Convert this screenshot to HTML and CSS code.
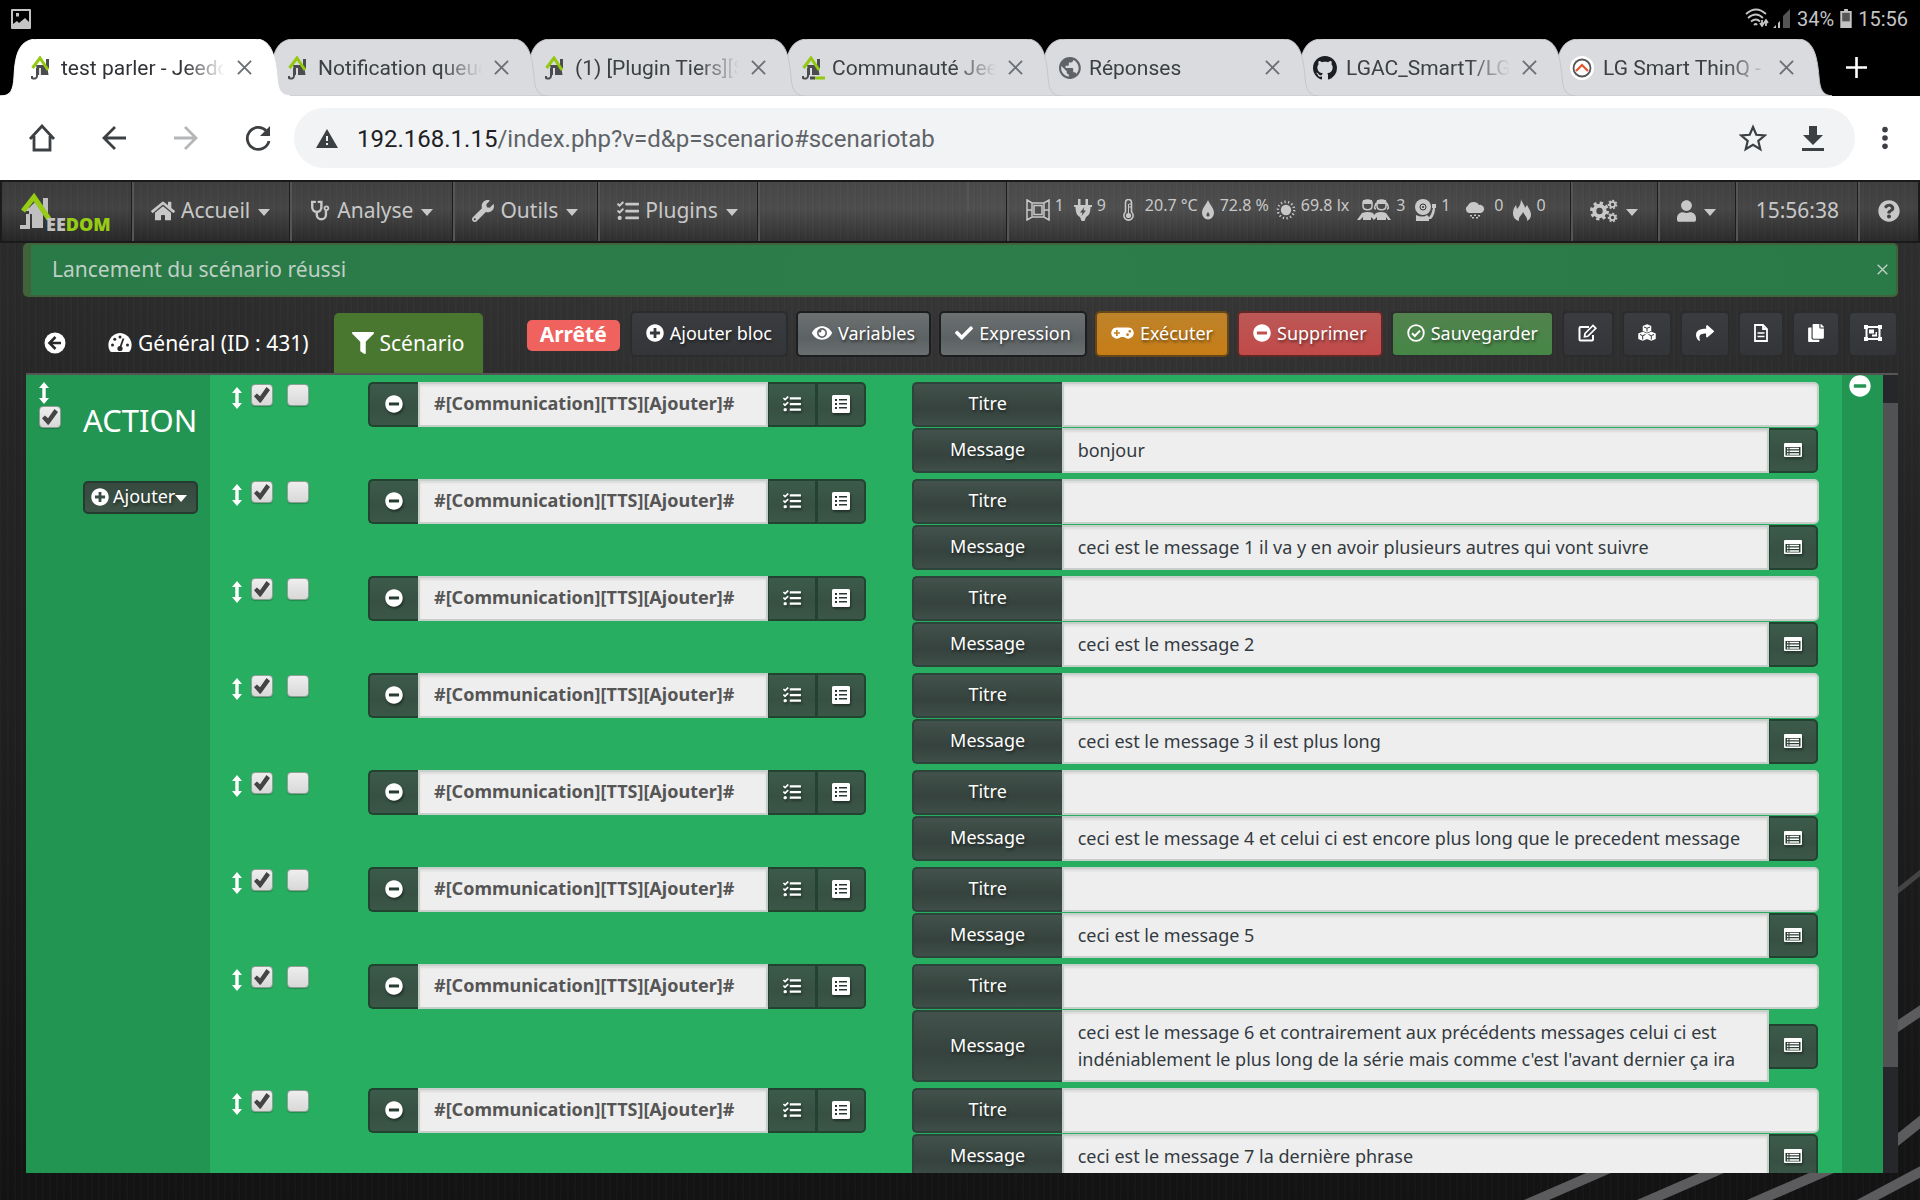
FILE: index.html
```html
<!DOCTYPE html>
<html lang="fr">
<head>
<meta charset="utf-8">
<title>test parler - Jeedom</title>
<link rel="stylesheet" href="styles.css">
</head>
<body>
<svg class="sprite" aria-hidden="true">
  <symbol id="shape" viewBox="0 0 290 57" preserveAspectRatio="none"><path d="M0 57C11 57 13 51 14 38C15 13 20 0 38 0H255C270 0 275 13 277 38C278 50 280 57 292 57Z"/></symbol>
  <symbol id="x" viewBox="0 0 16 16"><path d="M1 1L15 15M15 1L1 15" fill="none" stroke="currentColor" stroke-width="2"/></symbol>
  <symbol id="jee" viewBox="0 0 24 24"><path d="M5 9h11l1.500 10H7z" fill="#4b4b50"/><path d="M15 3h3v9h-3z" fill="#4b4b50"/><path d="M6 12v8c0 3-3 3-5 2v-2" fill="none" stroke="#4b4b50" stroke-width="2"/><path d="M8 12h2v7H8z" fill="#ddd"/><path d="M1.500 12L9 2l8 12" fill="none" stroke="#93c90f" stroke-width="3"/></symbol>
  <symbol id="home" viewBox="0 0 576 512"><path d="M280.37 148.26L96 300.11V464a16 16 0 0 0 16 16l112.06-.29a16 16 0 0 0 15.92-16V368a16 16 0 0 1 16-16h64a16 16 0 0 1 16 16v95.64a16 16 0 0 0 16 16.05L464 480a16 16 0 0 0 16-16V300L295.67 148.26a12.19 12.19 0 0 0-15.3 0zM571.6 251.47L488 182.56V44.05a12 12 0 0 0-12-12h-56a12 12 0 0 0-12 12v72.61L318.47 43a48 48 0 0 0-61 0L4.34 251.47a12 12 0 0 0-1.6 16.9l25.5 31A12 12 0 0 0 45.15 301l235.22-193.74a12.19 12.19 0 0 1 15.3 0L530.9 301a12 12 0 0 0 16.9-1.6l25.5-31a12 12 0 0 0-1.7-16.93z"/></symbol>
  <symbol id="steth" viewBox="0 0 21 24"><path d="M5 2H2v6a5 5 0 0 0 10 0V2H9M7 13v3a5 5 0 0 0 10 0v-5" fill="none" stroke="currentColor" stroke-width="2.6" stroke-linecap="round"/><circle cx="17.5" cy="9" r="3" fill="currentColor"/><circle cx="17.5" cy="9" r="1" fill="#333"/></symbol>
  <symbol id="wrench" viewBox="0 0 512 512"><path d="M507.73 109.1c-2.24-9.03-13.54-12.09-20.12-5.51l-74.36 74.36-67.88-11.31-11.31-67.88 74.36-74.36c6.62-6.62 3.43-17.9-5.66-20.16-47.38-11.74-99.55.91-136.58 37.93-39.64 39.64-50.55 97.1-34.05 147.2L18.74 402.76c-24.99 24.99-24.99 65.51 0 90.5 24.99 24.99 65.51 24.99 90.5 0l213.21-213.21c50.12 16.71 107.47 5.68 147.37-34.22 37.07-37.07 49.7-89.32 37.91-136.73zM64 472c-13.25 0-24-10.75-24-24 0-13.26 10.75-24 24-24s24 10.74 24 24c0 13.25-10.75 24-24 24z"/></symbol>
  <symbol id="tasks" viewBox="0 0 512 512"><path d="M139.61 35.5a12 12 0 0 0-17 0L58.93 98.81l-22.7-22.12a12 12 0 0 0-17 0L3.53 92.41a12 12 0 0 0 0 17l47.59 47.4a12.78 12.78 0 0 0 17.61 0l15.59-15.62L156.52 69a12.09 12.09 0 0 0 .09-17zm0 159.19a12 12 0 0 0-17 0l-63.68 63.72-22.7-22.1a12 12 0 0 0-17 0L3.53 252a12 12 0 0 0 0 17L51 316.5a12.77 12.77 0 0 0 17.6 0l15.7-15.69 72.2-72.22a12 12 0 0 0 .09-16.9zM64 368c-26.49 0-48.59 21.5-48.59 48S37.53 464 64 464a48 48 0 0 0 0-96zm432 16H208a16 16 0 0 0-16 16v32a16 16 0 0 0 16 16h288a16 16 0 0 0 16-16v-32a16 16 0 0 0-16-16zm0-320H208a16 16 0 0 0-16 16v32a16 16 0 0 0 16 16h288a16 16 0 0 0 16-16V80a16 16 0 0 0-16-16zm0 160H208a16 16 0 0 0-16 16v32a16 16 0 0 0 16 16h288a16 16 0 0 0 16-16v-32a16 16 0 0 0-16-16z"/></symbol>
  <symbol id="plus" viewBox="0 0 512 512"><path d="M256 8C119 8 8 119 8 256s111 248 248 248 248-111 248-248S393 8 256 8zm144 276c0 6.6-5.4 12-12 12h-92v92c0 6.6-5.4 12-12 12h-56c-6.6 0-12-5.4-12-12v-92h-92c-6.6 0-12-5.4-12-12v-56c0-6.6 5.4-12 12-12h92v-92c0-6.6 5.4-12 12-12h56c6.6 0 12 5.4 12 12v92h92c6.6 0 12 5.4 12 12v56z"/></symbol>
  <symbol id="minus" viewBox="0 0 512 512"><path d="M256 8C119 8 8 119 8 256s111 248 248 248 248-111 248-248S393 8 256 8zM124 296c-6.6 0-12-5.4-12-12v-56c0-6.6 5.4-12 12-12h264c6.6 0 12 5.4 12 12v56c0 6.6-5.4 12-12 12H124z"/></symbol>
  <symbol id="eye" viewBox="0 0 576 512"><path d="M572.52 241.4C518.29 135.59 410.93 64 288 64S57.68 135.64 3.48 241.41a32.35 32.35 0 0 0 0 29.19C57.71 376.41 165.07 448 288 448s230.32-71.64 284.52-177.41a32.35 32.35 0 0 0 0-29.19zM288 400a144 144 0 1 1 144-144 143.93 143.93 0 0 1-144 144zm0-240a95.31 95.31 0 0 0-25.31 3.79 47.85 47.85 0 0 1-66.9 66.9A95.78 95.78 0 1 0 288 160z"/></symbol>
  <symbol id="check" viewBox="0 0 512 512"><path d="M173.898 439.404l-166.4-166.4c-9.997-9.997-9.997-26.206 0-36.204l36.203-36.204c9.997-9.998 26.207-9.998 36.204 0L192 312.69 432.095 72.596c9.997-9.997 26.207-9.997 36.204 0l36.203 36.204c9.997 9.997 9.997 26.206 0 36.204l-294.4 294.401c-9.998 9.997-26.207 9.997-36.204-.001z"/></symbol>
  <symbol id="pad" viewBox="0 0 640 512"><path d="M480.07 96H160a160 160 0 1 0 114.24 272h91.5A160 160 0 1 0 480.07 96zM248 268a12 12 0 0 1-12 12h-52v52a12 12 0 0 1-12 12h-24a12 12 0 0 1-12-12v-52H84a12 12 0 0 1-12-12v-24a12 12 0 0 1 12-12h52v-52a12 12 0 0 1 12-12h24a12 12 0 0 1 12 12v52h52a12 12 0 0 1 12 12zm216 76a40 40 0 1 1 40-40 40 40 0 0 1-40 40zm64-96a40 40 0 1 1 40-40 40 40 0 0 1-40 40z"/></symbol>
  <symbol id="okc" viewBox="0 0 18 18"><circle cx="9" cy="9" r="7.8" fill="none" stroke="currentColor" stroke-width="1.8"/><path d="M5 9.3l2.8 2.7L13 6.6" fill="none" stroke="currentColor" stroke-width="2"/></symbol>
  <symbol id="filter" viewBox="0 0 512 512"><path d="M487.976 0H24.028C2.71 0-8.047 25.866 7.058 40.971L192 225.941V432c0 7.831 3.821 15.17 10.237 19.662l80 55.98C298.02 518.69 320 507.493 320 487.98V225.941l184.947-184.97C520.021 25.896 509.338 0 487.976 0z"/></symbol>
  <symbol id="user" viewBox="0 0 448 512"><path d="M224 256c70.7 0 128-57.3 128-128S294.7 0 224 0 96 57.3 96 128s57.3 128 128 128zm89.6 32h-16.7c-22.2 10.2-46.9 16-72.9 16s-50.6-5.8-72.9-16h-16.7C60.2 288 0 348.2 0 422.4V464c0 26.5 21.5 48 48 48h352c26.5 0 48-21.5 48-48v-41.6c0-74.2-60.2-134.4-134.4-134.4z"/></symbol>
  <symbol id="help" viewBox="0 0 512 512"><path d="M504 256c0 136.997-111.043 248-248 248S8 392.997 8 256C8 119.083 119.043 8 256 8s248 111.083 248 248zM262.655 90c-54.497 0-89.255 22.957-116.549 63.758-3.536 5.286-2.353 12.415 2.715 16.258l34.699 26.31c5.205 3.947 12.621 3.008 16.665-2.122 17.864-22.658 30.113-35.797 57.303-35.797 20.429 0 45.698 13.148 45.698 32.958 0 14.976-12.363 22.667-32.534 33.976C247.128 238.528 216 254.941 216 296v4c0 6.627 5.373 12 12 12h56c6.627 0 12-5.373 12-12v-1.333c0-28.462 83.186-29.647 83.186-106.667 0-58.002-60.165-102-116.531-102zM256 338c-25.365 0-46 20.635-46 46 0 25.364 20.635 46 46 46s46-20.636 46-46c0-25.365-20.635-46-46-46z"/></symbol>
  <symbol id="cogs" viewBox="0 0 28 24"><g fill="none" stroke="currentColor"><circle cx="9.5" cy="12" r="5.2" stroke-width="4"/><circle cx="9.5" cy="12" r="8" stroke-width="3" stroke-dasharray="3.2 3.08"/><circle cx="22.5" cy="5.5" r="2.6" stroke-width="1.8"/><circle cx="22.5" cy="5.5" r="4" stroke-width="1.6" stroke-dasharray="2 1.6"/><circle cx="22.5" cy="18.5" r="2.6" stroke-width="1.8"/><circle cx="22.5" cy="18.5" r="4" stroke-width="1.6" stroke-dasharray="2 1.6"/></g></symbol>
  <symbol id="dash" viewBox="0 0 24 22"><path d="M12 1a12 12 0 0 0-10.300 17.500q.8 1.500 2 1.500h16.600q1.200 0 2-1.500A12 12 0 0 0 12 1z"/><g fill="#2a2a2a"><circle cx="4.500" cy="13" r="1.500"/><circle cx="6.800" cy="7.200" r="1.500"/><circle cx="12" cy="5" r="1.500"/><circle cx="19.500" cy="13" r="1.500"/><circle cx="12" cy="16.500" r="2.600"/></g><path d="M12 16L15.500 6.500" stroke="#2a2a2a" stroke-width="1.800"/></symbol>
  <symbol id="back" viewBox="0 0 22 22"><circle cx="11" cy="11" r="10.500"/><path d="M11.500 5L5.500 11l6 6M6 11h11" fill="none" stroke="#2a2a2a" stroke-width="2.600"/></symbol>
  <symbol id="edit" viewBox="0 0 20 18"><path d="M11 3H2.500Q1.500 3 1.500 4v11.500q0 1 1 1H14q1 0 1-1V11" fill="none" stroke="currentColor" stroke-width="2"/><path d="M7 9.500L15 1.500l2.800 2.800L9.800 12.300 6.500 12.800z" fill="none" stroke="currentColor" stroke-width="1.700"/></symbol>
  <symbol id="cubes" viewBox="0 0 18 18"><g stroke="currentColor" stroke-width="1.500"><path d="M9 1l3.500 1.500v4L9 8 5.500 6.500v-4z"/><path d="M4.700 8.500L8.300 10v4.500L4.700 16 1 14.500V10zM13.300 8.500L17 10v4.500L13.300 16 9.700 14.500V10z"/></g><path d="M6 3l3 1.300L12 3M2 10.500l2.700 1.200 2.800-1.200M4.700 12v3.500M10.500 10.500l2.800 1.200 2.700-1.200M13.300 12v3.500M9 4.500v3" fill="none" stroke="#333" stroke-width="1"/></symbol>
  <symbol id="share" viewBox="0 0 512 512"><path d="M503.691 189.836L327.687 37.851C312.281 24.546 288 35.347 288 56.015v80.053C127.371 137.907 0 170.1 0 322.326c0 61.441 39.581 122.309 83.333 154.132 13.653 9.931 33.111-2.533 28.077-18.631C66.066 312.814 132.917 274.316 288 272.085V360c0 20.7 24.3 31.453 39.687 18.164l176.004-152c11.071-9.562 11.086-26.753 0-36.328z"/></symbol>
  <symbol id="file" viewBox="0 0 14 18"><path d="M1 1h8l4 4v12H1zM9 1v4h4" fill="none" stroke="currentColor" stroke-width="1.800"/><path d="M3.500 9h7M3.500 12.500h7" stroke="currentColor" stroke-width="1.700"/></symbol>
  <symbol id="copy" viewBox="0 0 448 512"><path d="M320 448v40c0 13.255-10.745 24-24 24H24c-13.255 0-24-10.745-24-24V120c0-13.255 10.745-24 24-24h72v296c0 30.879 25.121 56 56 56h168zm0-344V0H152c-13.255 0-24 10.745-24 24v368c0 13.255 10.745 24 24 24h272c13.255 0 24-10.745 24-24V128H344c-13.200 0-24-10.800-24-24zm120.971-31.029L375.029 7.029A24 24 0 0 0 358.059 0H352v96h96v-6.059a24 24 0 0 0-7.029-16.970z"/></symbol>
  <symbol id="group" viewBox="0 0 18 18"><path d="M2.500 3h13v12h-13z" fill="none" stroke="currentColor" stroke-width="2"/><path d="M0 1h4v4H0zM14 1h4v4h-4zM0 13h4v4H0zM14 13h4v4h-4zM5 5.500h5v4H5zM8 10.500h3.500V8H13v4.500H8z"/></symbol>
  <symbol id="list" viewBox="0 0 18 18"><path fill-rule="evenodd" d="M1.500 0h15q1.500 0 1.500 1.500v15q0 1.500-1.500 1.500h-15Q0 18 0 16.500v-15Q0 0 1.500 0zM3 4v2h2V4zm4 0v1.600h8V4zM3 8v2h2V8zm4 0v1.600h8V8zM3 12v2h2v-2zm4 0v1.600h8V12z"/></symbol>
  <symbol id="card" viewBox="0 0 18 14"><path fill-rule="evenodd" d="M1 0h16q1 0 1 1v12q0 1-1 1H1q-1 0-1-1V1q0-1 1-1zM1.500 4v8.500h15V4z"/><path d="M3 5.500h1.500M3 8.200h1.500M3 11h1.500M5.500 5.500H15M5.500 8.200H15M5.500 11H15" stroke="currentColor" stroke-width="1.500"/></symbol>
  <symbol id="updown" viewBox="0 0 10 22"><path d="M5 0l5 6H6.700v10H10l-5 6-5-6h3.300V6H0z"/></symbol>
  <symbol id="window" viewBox="0 0 24 22"><path d="M1 1l5 3h12l5-3v20l-5-3H6l-5 3zM6 4v14M18 4v14M1 11h5M18 11h5M8 6.500h8v9H8z" fill="none" stroke="currentColor" stroke-width="1.500"/></symbol>
  <symbol id="plug" viewBox="0 0 18 22"><path fill-rule="evenodd" d="M4 0h2.500v6h5V0H14v6h4v2h-1.500c0 6-2 9-4.500 10l-1.500 4h-3L6 18C3.500 17 1.500 14 1.500 8H0V6h4zM10.500 8L6 13.500h2.500L7.500 17l4.500-5.500H9.500z"/></symbol>
  <symbol id="thermo" viewBox="0 0 24 22"><path d="M9.500 13V3.500a3 3 0 0 1 6 0V13a4.600 4.600 0 1 1-6 0z" fill="none" stroke="currentColor" stroke-width="1.600"/><circle cx="12.500" cy="16.500" r="2.600"/><path d="M12.500 5v11M13 5h2M13 8h2" stroke="currentColor"/></symbol>
  <symbol id="drop" viewBox="0 0 14 20"><path fill-rule="evenodd" d="M7 0c2 5 6 8 6 13a6 6.500 0 0 1-12 0C1 8 5 5 7 0zM7 12c-1 1.500-1.500 2-1.500 3a1.500 1.500 0 0 0 3 0c0-1-.5-1.500-1.500-3z"/></symbol>
  <symbol id="sun" viewBox="0 0 20 20"><circle cx="10" cy="10" r="5.200"/><circle cx="10" cy="10" r="8.200" fill="none" stroke="currentColor" stroke-width="2.400" stroke-dasharray="1.300 2.378"/></symbol>
  <symbol id="people" viewBox="0 0 34 22"><g fill="none" stroke="currentColor" stroke-width="1.500"><path d="M6 4c0-4 9-4 9 0v3c0 5-9 5-9 0z"/><path d="M20 4c0-4 9-4 9 0v3c0 5-9 5-9 0zM19 10c-3 0 0-5 0-6M30 10c3 0 0-5 0-6"/></g><path d="M6 1h9v4H6zM20 1h9v4h-9zM0 21l5-7q6-2 11 0l1 2 2-2q5-2 10 0l5 7h-3l-2-3v3h-9v-3l-3 3-3-3v3H6v-3l-3 3z"/></symbol>
  <symbol id="alarm" viewBox="0 0 21 22"><circle cx="8" cy="8" r="8"/><g fill="none" stroke="#333"><circle cx="8" cy="8" r="3"/></g><circle cx="8" cy="8" r="1" fill="#333"/><path d="M1 16q7 3 11 0l2 2v4H1zM17 5h4v4h-1q0 7-4 11h-3q4-5 5-11h-1z"/></symbol>
  <symbol id="cloud" viewBox="0 0 29 22"><path d="M9 14a4 4 0 0 1-1-7.500A6 5.500 0 0 1 19 6a4 4 0 0 1 2 8zM10 16h2v1.500h-2zM14 15.500h2V17h-2zM18 16h2v1.500h-2zM12 18h2v1.500h-2zM16 18h2v1.500h-2z"/></symbol>
  <symbol id="fire" viewBox="0 0 18 22"><path d="M8 0c1 4 4 6 4 9l2-3c2 4 4 6 4 10 0 3-2 5-4 6 1-3-2-5-4-9-1 3-5 5-4 9-4-1-6-4-6-8 0-3 1-5 3-8l1 4c3-3 4-6 4-10z"/></symbol>
</svg>

<header class="device">
  <svg class="pic" viewBox="0 0 20 20"><path fill="#c4c4c4" fill-rule="evenodd" d="M1 0h18q1 0 1 1v18q0 1-1 1H1q-1 0-1-1V1q0-1 1-1zM2 2v13l4-3 2 2 6-5 4 4V2zM5 4h3v3.500H5z"/></svg>
  <div class="device-info">
    <svg class="wifi" viewBox="0 0 46 22"><g fill="none" stroke="#c4c4c4" stroke-width="1.800"><path d="M1 6q10-9 20 0M3 10q8-7 15 0M6 13.500q5-4 9 0M9 17q2-2 3 0M17 12v6M15 15l2 3 2-3M21 18v-6M19 15l2-3 2 3"/></g><path d="M28 20l3-3v3zM33 20v-5l2-2v7z" fill="#c4c4c4"/><path d="M38 20V8l7-7v19z" fill="#555"/></svg>
    <span>34%</span>
    <svg class="batt" viewBox="0 0 12 20"><path d="M4 0h4v2h4v18H0V2h4z" fill="#c4c4c4"/><path d="M2 4h8v9H2z" fill="#555"/></svg>
    <span>15:56</span>
  </div>
</header>

<nav class="tabs">
  <a class="tab active" href="#"><svg class="tab-shape"><use href="#shape"/></svg><svg class="fav"><use href="#jee"/></svg><span class="tab-title">test parler - Jeedom</span><svg class="tab-x"><use href="#x"/></svg></a>
  <a class="tab" href="#"><svg class="tab-shape"><use href="#shape"/></svg><svg class="fav"><use href="#jee"/></svg><span class="tab-title">Notification queue</span><svg class="tab-x"><use href="#x"/></svg></a>
  <a class="tab" href="#"><svg class="tab-shape"><use href="#shape"/></svg><svg class="fav"><use href="#jee"/></svg><span class="tab-title">(1) [Plugin Tiers][S</span><svg class="tab-x"><use href="#x"/></svg></a>
  <a class="tab" href="#"><svg class="tab-shape"><use href="#shape"/></svg><svg class="fav" viewBox="0 0 24 24"><use href="#jee" width="24" height="24"/><path d="M8 22h5" stroke="#4b4b50" stroke-width="3"/><path d="M13 22h10" stroke="#93c90f" stroke-width="3"/></svg><span class="tab-title">Communauté Jeedom</span><svg class="tab-x"><use href="#x"/></svg></a>
  <a class="tab" href="#"><svg class="tab-shape"><use href="#shape"/></svg><svg class="fav" viewBox="2 1 22 22"><path fill="#5f6368" d="M12 2C6.480 2 2 6.480 2 12s4.480 10 10 10 10-4.480 10-10S17.520 2 12 2zm-1 17.930c-3.950-.49-7-3.850-7-7.930 0-.62.08-1.210.21-1.790L9 15v1c0 1.100.9 2 2 2v1.930zm6.900-2.540c-.26-.81-1-1.390-1.900-1.390h-1v-3c0-.55-.45-1-1-1H8v-2h2c.55 0 1-.45 1-1V7h2c1.100 0 2-.9 2-2v-.41c2.930 1.190 5 4.060 5 7.410 0 2.080-.8 3.970-2.100 5.390z"/></svg><span class="tab-title">Réponses</span><svg class="tab-x"><use href="#x"/></svg></a>
  <a class="tab" href="#"><svg class="tab-shape"><use href="#shape"/></svg><svg class="fav wide" viewBox="0 0 16 16"><path fill="#1b1f23" d="M8 0C3.580 0 0 3.580 0 8c0 3.540 2.290 6.530 5.470 7.590.4.07.55-.17.55-.38 0-.19-.01-.82-.01-1.490-2.010.37-2.530-.49-2.690-.94-.09-.23-.48-.94-.82-1.130-.28-.15-.68-.52-.01-.53.63-.01 1.080.58 1.230.82.72 1.210 1.870.87 2.330.66.07-.52.28-.87.51-1.070-1.780-.2-3.640-.89-3.640-3.950 0-.87.31-1.590.82-2.150-.08-.2-.36-1.020.08-2.120 0 0 .67-.21 2.200.82.64-.18 1.320-.27 2-.27s1.360.09 2 .27c1.530-1.040 2.200-.82 2.200-.82.44 1.100.16 1.920.08 2.120.51.56.82 1.270.82 2.150 0 3.070-1.870 3.750-3.650 3.950.29.25.54.73.54 1.480 0 1.070-.01 1.930-.01 2.200 0 .21.15.46.55.38A8.010 8.010 0 0 0 16 8c0-4.420-3.580-8-8-8z"/></svg><span class="tab-title">LGAC_SmartT/LGAC</span><svg class="tab-x"><use href="#x"/></svg></a>
  <a class="tab" href="#"><svg class="tab-shape"><use href="#shape"/></svg><svg class="fav wide" viewBox="0 0 24 24"><circle cx="12" cy="12" r="12" fill="#fff"/><circle cx="12" cy="12" r="8.500" fill="none" stroke="#555" stroke-width="1.800"/><path d="M6 15l6-6 6 6" fill="none" stroke="#e2572b" stroke-width="2.200"/></svg><span class="tab-title">LG Smart ThinQ - P</span><svg class="tab-x"><use href="#x"/></svg></a>
  <button class="new-tab" aria-label="Nouvel onglet"><svg viewBox="0 0 21 21"><path d="M10.500 0v21M0 10.500h21" stroke="#fff" stroke-width="2.600"/></svg></button>
</nav>

<div class="toolbar">
  <button aria-label="Accueil"><svg viewBox="0 0 28 28"><path d="M2 15L14 2l12 13M6 12v14h16V12" fill="none" stroke="currentColor" stroke-width="2.800"/></svg></button>
  <button aria-label="Précédent"><svg viewBox="0 0 28 28"><path d="M15 3L4 14l11 11M4 14h22" fill="none" stroke="currentColor" stroke-width="2.800"/></svg></button>
  <button class="off" aria-label="Suivant"><svg viewBox="0 0 28 28"><path d="M13 3l11 11-11 11M24 14H2" fill="none" stroke="currentColor" stroke-width="2.800"/></svg></button>
  <button aria-label="Actualiser"><svg viewBox="0 0 28 28"><path d="M22 6.500A11 11 0 1 0 25 17" fill="none" stroke="currentColor" stroke-width="2.800"/><path d="M26 2v10H16z"/></svg></button>
  <div class="url">
    <svg class="warn" viewBox="0 0 22 19"><path fill-rule="evenodd" d="M11 0l11 19H0zM10 7v5h2V7zm0 7v2h2v-2z"/></svg>
    <span class="address"><b>192.168.1.15</b>/index.php?v=d&amp;p=scenario#scenariotab</span>
    <button aria-label="Favori"><svg viewBox="0 0 28 28"><path d="M14 3l3.300 7.800 8.400.7-6.400 5.500 2 8.200L14 20.800l-7.300 4.400 2-8.200-6.400-5.500 8.400-.7z" fill="none" stroke="currentColor" stroke-width="2.200"/></svg></button>
    <button aria-label="Télécharger"><svg viewBox="0 0 28 28"><path d="M10 2h8v9h6L14 21 4 11h6zM3 24h22v3H3z"/></svg></button>
  </div>
  <button class="more" aria-label="Menu"><svg viewBox="0 0 28 28"><circle cx="14" cy="5" r="3"/><circle cx="14" cy="14" r="3"/><circle cx="14" cy="23" r="3"/></svg></button>
</div>

<main class="app">
  <svg class="stripes" viewBox="0 0 450 340" aria-hidden="true"><g stroke="#5c5c5e" stroke-width="10"><path d="M55 345L140 308M168 345L253 308M278 345L363 308M388 345L465 304M425 168L455 148M425 282L455 258"/><path d="M425 33L455 9" stroke-width="5" stroke="#444"/></g></svg>
  <nav class="menu">
    <a class="brand" href="#"><svg viewBox="0 0 34 40"><path d="M9 16l6-6 8 12v14H12V22H9z" fill="#c0c0c0"/><path d="M23 6h5v17h-5z" fill="#c0c0c0"/><path d="M8 22v13h-6v-2" fill="none" stroke="#c0c0c0" stroke-width="4"/><path d="M8 19v-3" stroke="#c0c0c0" stroke-width="4"/><path d="M3 19L14 5l15 22" fill="none" stroke="#97cc14" stroke-width="5"/></svg><span>EE<em>DOM</em></span></a>
    <a class="item" href="#"><svg class="i24"><use href="#home"/></svg>Accueil<i class="caret"></i></a>
    <a class="item" href="#"><svg class="i22"><use href="#steth"/></svg>Analyse<i class="caret"></i></a>
    <a class="item" href="#"><svg class="i22"><use href="#wrench"/></svg>Outils<i class="caret"></i></a>
    <a class="item" href="#"><svg class="i22"><use href="#tasks"/></svg>Plugins<i class="caret"></i></a>
    <div class="spacer"><i></i></div>
    <div class="summary">
      <span><svg width="24"><use href="#window"/></svg>1</span>
      <span><svg width="18"><use href="#plug"/></svg>9</span>
      <span class="temp"><svg width="24"><use href="#thermo"/></svg>20.7 °C</span>
      <span class="humidity"><svg width="14"><use href="#drop"/></svg>72.8 %</span>
      <span class="light"><svg width="20"><use href="#sun"/></svg>69.8 lx</span>
      <span><svg width="34"><use href="#people"/></svg>3</span>
      <span><svg width="21"><use href="#alarm"/></svg>1</span>
      <span><svg width="29"><use href="#cloud"/></svg>0</span>
      <span><svg width="18"><use href="#fire"/></svg>0</span>
    </div>
    <a class="item tight" href="#" aria-label="Réglages"><svg class="i28"><use href="#cogs"/></svg><i class="caret"></i></a>
    <a class="item tight" href="#" aria-label="Profil"><svg class="i20"><use href="#user"/></svg><i class="caret"></i></a>
    <span class="item clock">15:56:38</span>
    <a class="item help" href="#" aria-label="Aide"><svg class="i22"><use href="#help"/></svg></a>
  </nav>

  <div class="content">
    <div class="alert"><span>Lancement du scénario réussi</span><button aria-label="Fermer"><svg viewBox="0 0 16 16"><use href="#x"/></svg></button></div>

    <div class="head">
      <a class="head-tab back" href="#" aria-label="Retour"><svg class="i22"><use href="#back"/></svg></a>
      <a class="head-tab general" href="#"><svg class="i24"><use href="#dash"/></svg>Général (ID : 431)</a>
      <a class="head-tab on" href="#"><svg class="i22"><use href="#filter"/></svg>Scénario</a>
      <div class="actions">
        <span class="state">Arrêté</span>
        <button class="btn"><svg width="18"><use href="#plus"/></svg>Ajouter bloc</button>
        <button class="btn grey"><svg width="20"><use href="#eye"/></svg>Variables</button>
        <button class="btn grey"><svg width="18"><use href="#check"/></svg>Expression</button>
        <button class="btn orange"><svg width="23"><use href="#pad"/></svg>Exécuter</button>
        <button class="btn red"><svg width="18"><use href="#minus"/></svg>Supprimer</button>
        <button class="btn green"><svg width="18"><use href="#okc"/></svg>Sauvegarder</button>
        <button class="btn" aria-label="Modifier"><svg width="20"><use href="#edit"/></svg></button>
        <button class="btn" aria-label="Blocs"><svg width="18"><use href="#cubes"/></svg></button>
        <button class="btn" aria-label="Partager"><svg width="18"><use href="#share"/></svg></button>
        <button class="btn" aria-label="Log"><svg width="14"><use href="#file"/></svg></button>
        <button class="btn" aria-label="Dupliquer"><svg width="16"><use href="#copy"/></svg></button>
        <button class="btn" aria-label="Grouper"><svg width="18"><use href="#group"/></svg></button>
      </div>
    </div>

    <div class="panel">
      <aside class="side">
        <div class="side-tools"><svg class="grip"><use href="#updown"/></svg><input type="checkbox" checked aria-label="Activer le bloc"></div>
        <div class="side-main"><h1>ACTION</h1><button class="add"><svg width="18"><use href="#plus"/></svg>Ajouter<i class="caret"></i></button></div>
      </aside>
      <div class="rows">
        <div class="row">
          <div class="checks"><svg class="grip"><use href="#updown"/></svg><input type="checkbox" checked aria-label="Activer"><input type="checkbox" aria-label="Parallèle"></div>
          <div class="cmd"><button aria-label="Retirer"><svg width="18"><use href="#minus"/></svg></button><input type="text" aria-label="Commande" value="#[Communication][TTS][Ajouter]#"><button aria-label="Actions"><svg width="18"><use href="#tasks"/></svg></button><button aria-label="Liste"><svg width="18"><use href="#list"/></svg></button></div>
          <div class="opts"><div class="opt"><label for="t0">Titre</label><input type="text" id="t0"></div><div class="opt"><label for="m0">Message</label><textarea id="m0" rows="1">bonjour</textarea><button aria-label="Choisir"><svg width="18"><use href="#card"/></svg></button></div></div>
        </div>
        <div class="row">
          <div class="checks"><svg class="grip"><use href="#updown"/></svg><input type="checkbox" checked aria-label="Activer"><input type="checkbox" aria-label="Parallèle"></div>
          <div class="cmd"><button aria-label="Retirer"><svg width="18"><use href="#minus"/></svg></button><input type="text" aria-label="Commande" value="#[Communication][TTS][Ajouter]#"><button aria-label="Actions"><svg width="18"><use href="#tasks"/></svg></button><button aria-label="Liste"><svg width="18"><use href="#list"/></svg></button></div>
          <div class="opts"><div class="opt"><label for="t1">Titre</label><input type="text" id="t1"></div><div class="opt"><label for="m1">Message</label><textarea id="m1" rows="1">ceci est le message 1 il va y en avoir plusieurs autres qui vont suivre</textarea><button aria-label="Choisir"><svg width="18"><use href="#card"/></svg></button></div></div>
        </div>
        <div class="row">
          <div class="checks"><svg class="grip"><use href="#updown"/></svg><input type="checkbox" checked aria-label="Activer"><input type="checkbox" aria-label="Parallèle"></div>
          <div class="cmd"><button aria-label="Retirer"><svg width="18"><use href="#minus"/></svg></button><input type="text" aria-label="Commande" value="#[Communication][TTS][Ajouter]#"><button aria-label="Actions"><svg width="18"><use href="#tasks"/></svg></button><button aria-label="Liste"><svg width="18"><use href="#list"/></svg></button></div>
          <div class="opts"><div class="opt"><label for="t2">Titre</label><input type="text" id="t2"></div><div class="opt"><label for="m2">Message</label><textarea id="m2" rows="1">ceci est le message 2</textarea><button aria-label="Choisir"><svg width="18"><use href="#card"/></svg></button></div></div>
        </div>
        <div class="row">
          <div class="checks"><svg class="grip"><use href="#updown"/></svg><input type="checkbox" checked aria-label="Activer"><input type="checkbox" aria-label="Parallèle"></div>
          <div class="cmd"><button aria-label="Retirer"><svg width="18"><use href="#minus"/></svg></button><input type="text" aria-label="Commande" value="#[Communication][TTS][Ajouter]#"><button aria-label="Actions"><svg width="18"><use href="#tasks"/></svg></button><button aria-label="Liste"><svg width="18"><use href="#list"/></svg></button></div>
          <div class="opts"><div class="opt"><label for="t3">Titre</label><input type="text" id="t3"></div><div class="opt"><label for="m3">Message</label><textarea id="m3" rows="1">ceci est le message 3 il est plus long</textarea><button aria-label="Choisir"><svg width="18"><use href="#card"/></svg></button></div></div>
        </div>
        <div class="row">
          <div class="checks"><svg class="grip"><use href="#updown"/></svg><input type="checkbox" checked aria-label="Activer"><input type="checkbox" aria-label="Parallèle"></div>
          <div class="cmd"><button aria-label="Retirer"><svg width="18"><use href="#minus"/></svg></button><input type="text" aria-label="Commande" value="#[Communication][TTS][Ajouter]#"><button aria-label="Actions"><svg width="18"><use href="#tasks"/></svg></button><button aria-label="Liste"><svg width="18"><use href="#list"/></svg></button></div>
          <div class="opts"><div class="opt"><label for="t4">Titre</label><input type="text" id="t4"></div><div class="opt"><label for="m4">Message</label><textarea id="m4" rows="1">ceci est le message 4 et celui ci est encore plus long que le precedent message</textarea><button aria-label="Choisir"><svg width="18"><use href="#card"/></svg></button></div></div>
        </div>
        <div class="row">
          <div class="checks"><svg class="grip"><use href="#updown"/></svg><input type="checkbox" checked aria-label="Activer"><input type="checkbox" aria-label="Parallèle"></div>
          <div class="cmd"><button aria-label="Retirer"><svg width="18"><use href="#minus"/></svg></button><input type="text" aria-label="Commande" value="#[Communication][TTS][Ajouter]#"><button aria-label="Actions"><svg width="18"><use href="#tasks"/></svg></button><button aria-label="Liste"><svg width="18"><use href="#list"/></svg></button></div>
          <div class="opts"><div class="opt"><label for="t5">Titre</label><input type="text" id="t5"></div><div class="opt"><label for="m5">Message</label><textarea id="m5" rows="1">ceci est le message 5</textarea><button aria-label="Choisir"><svg width="18"><use href="#card"/></svg></button></div></div>
        </div>
        <div class="row">
          <div class="checks"><svg class="grip"><use href="#updown"/></svg><input type="checkbox" checked aria-label="Activer"><input type="checkbox" aria-label="Parallèle"></div>
          <div class="cmd"><button aria-label="Retirer"><svg width="18"><use href="#minus"/></svg></button><input type="text" aria-label="Commande" value="#[Communication][TTS][Ajouter]#"><button aria-label="Actions"><svg width="18"><use href="#tasks"/></svg></button><button aria-label="Liste"><svg width="18"><use href="#list"/></svg></button></div>
          <div class="opts"><div class="opt"><label for="t6">Titre</label><input type="text" id="t6"></div><div class="opt"><label for="m6">Message</label><textarea id="m6" rows="2">ceci est le message 6 et contrairement aux précédents messages celui ci est indéniablement le plus long de la série mais comme c'est l'avant dernier ça ira</textarea><button aria-label="Choisir"><svg width="18"><use href="#card"/></svg></button></div></div>
        </div>
        <div class="row">
          <div class="checks"><svg class="grip"><use href="#updown"/></svg><input type="checkbox" checked aria-label="Activer"><input type="checkbox" aria-label="Parallèle"></div>
          <div class="cmd"><button aria-label="Retirer"><svg width="18"><use href="#minus"/></svg></button><input type="text" aria-label="Commande" value="#[Communication][TTS][Ajouter]#"><button aria-label="Actions"><svg width="18"><use href="#tasks"/></svg></button><button aria-label="Liste"><svg width="18"><use href="#list"/></svg></button></div>
          <div class="opts"><div class="opt"><label for="t7">Titre</label><input type="text" id="t7"></div><div class="opt"><label for="m7">Message</label><textarea id="m7" rows="1">ceci est le message 7 la dernière phrase</textarea><button aria-label="Choisir"><svg width="18"><use href="#card"/></svg></button></div></div>
        </div>
      </div>
      <div class="close-col"><svg class="i22"><use href="#minus"/></svg></div>
      <div class="scroll"><i></i></div>
    </div>
  </div>
</main>
</body>
</html>
```
FILE: styles.css
```css
* { box-sizing: border-box; }
body {
  margin: 0;
  height: 100vh;
  display: flex;
  flex-direction: column;
  overflow: hidden;
  background: #000;
  font: 18px/27px "Noto Sans", sans-serif;
}
svg { fill: currentColor; flex: none; display: block; }
a { color: inherit; text-decoration: none; }
button { font: inherit; color: inherit; background: none; border: 0; padding: 0; margin: 0; }
i { display: block; }
.sprite { position: absolute; width: 0; height: 0; }

/* device status bar */
.device {
  height: 39px;
  flex: none;
  display: flex;
  justify-content: space-between;
  align-items: center;
  padding: 0 12px 2px 11px;
  color: #c4c4c4;
  font: 20px/24px Roboto, sans-serif;
}
.pic { width: 20px; height: 20px; }
.device-info { display: flex; align-items: center; gap: 6px; }
.wifi { width: 46px; height: 22px; }
.batt { width: 12px; height: 19px; }

/* browser tabs */
.tabs { height: 57px; flex: none; display: flex; font: 21px/28px Roboto, sans-serif; color: #3c4043; }
.tab { position: relative; flex: 0 1 257px; min-width: 0; display: flex; align-items: center; padding: 0 5px 0 31px; }
.tab > * { position: relative; }
.tab .tab-shape { position: absolute; left: 0; top: 0; width: calc(100% + 33px); height: 57px; color: #dadbdf; stroke: #c6c7cb; stroke-width: 1px; overflow: visible; }
.tab.active { color: #303236; }
.tab.active .tab-shape { color: #fff; stroke: #fff; }
.tab:nth-child(1) { z-index: 7; }
.tab:nth-child(2) { z-index: 6; }
.tab:nth-child(3) { z-index: 5; }
.tab:nth-child(4) { z-index: 4; }
.tab:nth-child(5) { z-index: 3; }
.tab:nth-child(6) { z-index: 2; }
.tab:nth-child(7) { z-index: 1; }
.fav { width: 24px; height: 24px; margin-right: 6px; }
.fav.wide { margin: 0 9px 0 -3px; }
.tab-title { flex: 1; overflow: hidden; white-space: nowrap; -webkit-mask-image: linear-gradient(90deg, #000 75%, transparent); mask-image: linear-gradient(90deg, #000 75%, transparent); }
.tab-x { width: 15px; height: 15px; margin-left: 12px; color: #6b6e72; }
.new-tab { width: 21px; margin-left: 47px; }
.new-tab svg { width: 21px; height: 21px; }

/* address bar */
.toolbar { height: 84px; flex: none; display: flex; align-items: center; background: #fff; color: #3c4043; padding: 0 21px 0 28px; }
.toolbar svg { width: 28px; height: 28px; }
.toolbar > button { width: 28px; margin-right: 44px; }
.toolbar > button.off { color: #b4b6b8; }
.toolbar > button:nth-child(4) { margin-right: 22px; }
.toolbar > button.more { margin: 0 0 0 16px; }
.more svg { height: 26px; }
.url { flex: 1; min-width: 0; height: 60px; border-radius: 30px; background: #f1f3f4; display: flex; align-items: center; gap: 32px; padding: 0 28px 0 22px; }
.toolbar .warn { width: 22px; height: 19px; }
.address { flex: 1; margin-left: -13px; padding-top: 1px; font: 24px/30px Roboto, sans-serif; color: #5f6368; white-space: nowrap; overflow: hidden; }
.address b { font-weight: 400; color: #202124; }

/* application */
.app {
  position: relative;
  flex: 1;
  min-height: 0;
  display: flex;
  flex-direction: column;
  color: #fff;
  background:
    repeating-linear-gradient(90deg, rgba(255,255,255,.014) 0 2px, rgba(0,0,0,.05) 2px 3px, transparent 3px 7px),
    radial-gradient(1200px 500px at 55% 0, rgba(255,255,255,.09), transparent),
    linear-gradient(#2a2a2a, #202020 50%, #131313);
}
.stripes { position: absolute; right: 0; bottom: 0; width: 450px; height: 340px; }
.i20 { width: 19px; height: 22px; }
.i22 { width: 22px; height: 22px; }
.i24 { width: 24px; height: 22px; }
.i28 { width: 28px; height: 24px; }
.caret { border: 6px solid transparent; border-top: 7px solid; border-bottom: 0; }

.menu {
  position: relative;
  height: 63px;
  flex: none;
  display: flex;
  border: 2px solid #1a1a1a;
  color: #c8c8c8;
  font-size: 21px;
  background: linear-gradient(rgba(255,255,255,.07), rgba(255,255,255,.1) 45%, rgba(0,0,0,.1));
}
.menu > * { border-left: 2px solid #555; box-shadow: -1px 0 #1c1c1c; }
.menu > .brand { border: 0; width: 130px; display: flex; align-items: flex-end; padding: 0 0 9px 18px; }
.brand svg { width: 34px; height: 40px; }
.brand span { margin-left: -8px; font: 800 18px/16px "Open Sans", sans-serif; color: #c0c0c0; }
.brand em { font-style: normal; color: #97cc14; }
.item { display: flex; align-items: center; gap: 6px; padding: 0 20px 2px 17px; }
.item .caret { margin: 4px 0 0 2px; }
.item.tight { padding: 0 20px 2px 17px; gap: 6px; }
.item.clock { padding: 0 19px 2px 18px; }
.item.help { padding: 0 18px 2px; }
.spacer { flex: 1; display: flex; justify-content: flex-end; }
.spacer i { width: 2px; height: 30px; background: #555; margin-right: 38px; }
.summary { width: 564px; display: flex; justify-content: space-between; padding: 17px 25px 0 17px; font-size: 16px; line-height: 12px; white-space: nowrap; }
.summary span { display: flex; gap: 5px; }
.summary svg { height: 22px; }
.summary .temp { margin-right: -7px; }
.summary .humidity { margin-right: -3px; }
.summary .light { margin-right: -2px; }

.content { position: relative; flex: 1; min-height: 0; display: flex; flex-direction: column; margin: 0 22px 27px 23px; }
.alert {
  height: 54px;
  flex: none;
  display: flex;
  align-items: center;
  justify-content: space-between;
  border: 2px solid #40633c;
  border-left-width: 8px;
  border-radius: 5px;
  padding: 0 8px 1px 21px;
  font-size: 21px;
  color: #bfd0c5;
  background: linear-gradient(90deg, #29794600, #35875140 50%, #29794600), #2a7a48;
}
.alert svg { width: 11px; height: 11px; }

.head { height: 78px; flex: none; display: flex; align-items: flex-start; padding-top: 16px; font-size: 21px; margin-left: 3px; border-bottom: 2px solid #555; }
.head-tab { height: 60px; display: flex; align-items: center; gap: 6px; padding: 0 18px; white-space: nowrap; }
.head-tab.back { padding-right: 35px; }
.head-tab.general { padding: 0 25px 0 7px; }
.head-tab.on { background: #4a772f; border-radius: 5px 5px 0 0; }
.actions { flex: 1; display: flex; align-items: flex-start; justify-content: flex-end; gap: 8px; font-size: 18px; margin-top: -2px; }
.state { margin: 9px 2px 0 0; height: 31px; padding: 0 13px; border-radius: 5px; background: #ef625e; font: bold 21px/29px "Noto Sans", sans-serif; }
.btn {
  height: 46px;
  display: flex;
  align-items: center;
  gap: 6px;
  padding: 0 14px 2px;
  border: 2px solid #2b2c2e;
  border-radius: 5px;
  background: linear-gradient(#3a3c3f, #333538) padding-box;
  text-shadow: 1px 2px 3px rgba(0,0,0,.5);
  white-space: nowrap;
}
.btn svg, .add svg { height: 18px; }
.btn.grey { background: linear-gradient(#6d7172, #5c6163 60%, #6a6f70); border-color: #1d1e1f; }
.btn.orange { background: linear-gradient(#be832b, #c67d16); border-color: #65471a; }
.btn.red { background: linear-gradient(#bb5856, #c14a48); border-color: #5f2929; }
.btn.green { background: linear-gradient(#52824e, #458746); border-color: #2e2e2e; }

.panel { flex: 1; min-height: 0; overflow: hidden; display: flex; margin-left: 3px; background: #28ae60; }
.side { width: 184px; flex: none; background: #239553; display: flex; padding: 7px 0 0 12px; }
.side-tools { width: 45px; padding-left: 1px; }
.grip { width: 10px; height: 22px; }
.side-tools .grip { margin-bottom: 2px; }
input[type=checkbox] { appearance: none; flex: none; display: block; width: 22px; height: 22px; margin: 0; border: 1px solid #8f9f96; border-radius: 4px; background: linear-gradient(#eee, #d8d8d8); box-shadow: 0 1px 1px rgba(0,0,0,.2); }
input[type=checkbox]:checked::before { content: ""; display: block; width: 16px; height: 16px; margin: 2px; background: #444; clip-path: polygon(0 58%, 18% 40%, 38% 58%, 78% 0, 100% 18%, 42% 98%, 36% 98%); }
.side-main { display: flex; flex-direction: column; }
h1 { margin: 17px 0 40px; font: 31px/42px "Noto Sans", sans-serif; }
.add { display: flex; align-items: center; gap: 4px; width: 115px; height: 33px; padding: 0 6px 2px; border: 2px solid #243b30; border-radius: 5px; background: linear-gradient(#36493f, #3d5446); text-shadow: 1px 2px 3px rgba(0,0,0,.5); }
.add .caret { margin: 4px 0 0 -4px; }
.rows { flex: 1; min-width: 0; padding: 7px 24px 0 22px; }
.row { display: grid; grid-template-columns: 90px 498fr 907fr; column-gap: 46px; align-items: start; margin-bottom: 6px; }
.checks { display: flex; gap: 14px; padding-top: 2px; }
.checks .grip { margin: 3px -5px 0 0; }
.cmd, .opt { display: flex; align-items: center; }
.opt + .opt { margin-top: 1px; }
.cmd button, .opt button { width: 49px; height: 45px; flex: none; display: flex; align-items: center; justify-content: center; padding-bottom: 2px; border: 2px solid #22432f; border-left-width: 1px; background: linear-gradient(#3c5b4b, #375043 60%, #3b5748); }
.cmd button:first-child { width: 50px; border-left-width: 2px; border-right: 0; border-radius: 5px 0 0 5px; }
.cmd button:last-child, .opt button { border-radius: 0 5px 5px 0; }
.cmd button svg, .opt button svg { height: 18px; filter: drop-shadow(1px 2px 1px rgba(0,0,0,.4)); }
.cmd input, .opt input, .opt textarea {
  flex: 1;
  min-width: 0;
  height: 45px;
  margin: 0;
  padding: 7px 14px;
  border: 2px solid #c6cfc9;
  border-radius: 0;
  outline: 0;
  resize: none;
  overflow: hidden;
  background: #eee;
  color: #333a3f;
  font: 18px/27px "Noto Sans", sans-serif;
  box-shadow: inset 0 2px 2px rgba(0,0,0,.08);
}
.cmd input { padding: 5px 14px 9px; font-weight: 700; color: #555; }
.opt input { border-radius: 0 5px 5px 0; margin-right: -1px; }
.opt textarea { height: auto; display: block; }
.opt label { width: 150px; flex: none; align-self: stretch; display: flex; align-items: center; justify-content: center; padding-bottom: 2px; border: 2px solid #2c4439; border-right: 0; border-radius: 5px 0 0 5px; background: linear-gradient(#43524c, #35423d 60%, #3f4e48); text-shadow: 1px 2px 3px rgba(0,0,0,.5); }
.close-col { width: 41px; flex: none; background: #239553; padding-left: 7px; }
.scroll { width: 15px; flex: none; display: flex; flex-direction: column; background: #25272b; }
.scroll::before { content: ""; flex: 28; }
.scroll i { flex: 664; background: #515254; }
.scroll::after { content: ""; flex: 106; }
```
